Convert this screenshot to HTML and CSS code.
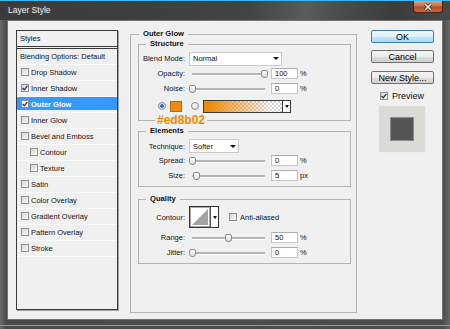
FILE: index.html
```html
<!DOCTYPE html>
<html lang="en">
<head>
    <meta charset="UTF-8">
    <title>Layer Style</title>
    <link rel="stylesheet" href="styles.css">
</head>
<body>
    <div class="window">
        <div class="titlebar">
            <span class="title">Layer Style</span>
            <span class="close">
                <svg width="10" height="8" viewBox="0 0 10 8"><path d="M2 1 L8 7 M8 1 L2 7" stroke="#3a1a0a" stroke-width="3"/><path d="M2 1 L8 7 M8 1 L2 7" stroke="#fff" stroke-width="1.6"/></svg>
            </span>
        </div>

        <div class="client">
            <div class="styles-list">
                <div class="list-head">Styles</div>
                <div class="list-body">
                    <div class="item plain">Blending Options: Default</div>
                    <div class="item"><span class="check"></span>Drop Shadow</div>
                    <div class="item"><span class="check"><svg width="6" height="6" viewBox="0 0 6 6"><path d="M0.6 3 L2.2 4.8 L5.4 0.8" fill="none" stroke="#1d2b55" stroke-width="1.2"/></svg></span>Inner Shadow</div>
                    <div class="item selected"><span class="check"><svg width="6" height="6" viewBox="0 0 6 6"><path d="M0.6 3 L2.2 4.8 L5.4 0.8" fill="none" stroke="#1d2b55" stroke-width="1.2"/></svg></span>Outer Glow</div>
                    <div class="item"><span class="check"></span>Inner Glow</div>
                    <div class="item"><span class="check"></span>Bevel and Emboss</div>
                    <div class="item sub"><span class="check"></span>Contour</div>
                    <div class="item sub"><span class="check"></span>Texture</div>
                    <div class="item"><span class="check"></span>Satin</div>
                    <div class="item"><span class="check"></span>Color Overlay</div>
                    <div class="item"><span class="check"></span>Gradient Overlay</div>
                    <div class="item"><span class="check"></span>Pattern Overlay</div>
                    <div class="item"><span class="check"></span>Stroke</div>
                </div>
            </div>

            <fieldset class="group outer">
                <legend>Outer Glow</legend>

                <fieldset class="group inner structure">
                    <legend>Structure</legend>
                    <div class="row">
                        <span class="lbl">Blend Mode:</span>
                        <div class="select blend-select">Normal<i class="caret"></i></div>
                    </div>
                    <div class="row">
                        <span class="lbl">Opacity:</span>
                        <div class="slider"><span class="thumb" style="left: 72px"></span></div>
                        <span class="num">100</span>
                        <span class="unit">%</span>
                    </div>
                    <div class="row">
                        <span class="lbl">Noise:</span>
                        <div class="slider"><span class="thumb" style="left: 0px"></span></div>
                        <span class="num">0</span>
                        <span class="unit">%</span>
                    </div>
                    <div class="row row-color">
                        <span class="radio on"></span>
                        <span class="swatch"></span>
                        <span class="radio"></span>
                        <div class="grad">
                            <span class="grad-fill"></span>
                            <span class="grad-arrow"><i class="caret small"></i></span>
                        </div>
                        <span class="hex">#ed8b02</span>
                    </div>
                </fieldset>

                <fieldset class="group inner elements">
                    <legend>Elements</legend>
                    <div class="row row-short">
                        <span class="lbl">Technique:</span>
                        <div class="select tech-select">Softer<i class="caret"></i></div>
                    </div>
                    <div class="row">
                        <span class="lbl">Spread:</span>
                        <div class="slider"><span class="thumb" style="left: 0px"></span></div>
                        <span class="num">0</span>
                        <span class="unit">%</span>
                    </div>
                    <div class="row">
                        <span class="lbl">Size:</span>
                        <div class="slider"><span class="thumb" style="left: 4px"></span></div>
                        <span class="num">5</span>
                        <span class="unit">px</span>
                    </div>
                </fieldset>

                <fieldset class="group inner quality">
                    <legend>Quality</legend>
                    <div class="row row-contour">
                        <span class="lbl">Contour:</span>
                        <div class="contour">
                            <svg width="20" height="20" viewBox="0 0 20 20"><rect x="0.5" y="0.5" width="19" height="19" fill="#fff" stroke="#a6a6a6"/><polygon points="2,18 18,2 18,18" fill="#a4a4a4"/></svg>
                            <span class="contour-arrow"><i class="caret small"></i></span>
                        </div>
                        <span class="check aa"></span>
                        <span>Anti-aliased</span>
                    </div>
                    <div class="row row-range">
                        <span class="lbl">Range:</span>
                        <div class="slider"><span class="thumb" style="left: 36px"></span></div>
                        <span class="num">50</span>
                        <span class="unit">%</span>
                    </div>
                    <div class="row">
                        <span class="lbl">Jitter:</span>
                        <div class="slider"><span class="thumb" style="left: 0px"></span></div>
                        <span class="num">0</span>
                        <span class="unit">%</span>
                    </div>
                </fieldset>
            </fieldset>

            <div class="actions">
                <div class="btn default">OK</div>
                <div class="btn cancel">Cancel</div>
                <div class="btn new-style">New Style...</div>
                <div class="preview-row">
                    <span class="check"><svg width="6" height="6" viewBox="0 0 6 6"><path d="M0.6 3 L2.2 4.8 L5.4 0.8" fill="none" stroke="#1d2b55" stroke-width="1.2"/></svg></span>
                    <span>Preview</span>
                </div>
                <div class="preview-box"><span></span></div>
            </div>
        </div>
    </div>
</body>
</html>
```

FILE: styles.css
```css
* {
    margin: 0;
    padding: 0;
    box-sizing: border-box;
}

body {
    width: 450px;
    height: 329px;
    overflow: hidden;
    font-family: 'Liberation Sans', Arial, sans-serif;
    font-size: 7.5px;
    color: #111;
    background: #4a4a4a;
}

/* window frame */
.window {
    height: 329px;
    display: flex;
    flex-direction: column;
    padding: 0 7px 9px;
    border-top: 1px solid #3cb8ea;
    background:
        linear-gradient(#3cb8ea, #3cb8ea) left bottom 3px / 100% 1px no-repeat,
        linear-gradient(90deg, #6a6a6a, #4a4a4a 1.5%, #4e4e4e 98.5%, #686868);
}

.titlebar {
    height: 19px;
    flex: none;
    margin: 0 -7px;
    padding: 0 7px;
    display: flex;
    justify-content: space-between;
    align-items: flex-start;
    background: linear-gradient(100deg, #3a3a3a 0%, #434343 55%, #5a5a5a 68%, #4a4a4a 76%, #3c3c3c 88%, #484848 100%);
}

.title {
    padding: 4px 0 0 1px;
    font-size: 8.5px;
    line-height: 10px;
    color: #e6e6e6;
    text-shadow: 0 0 3px rgba(255, 255, 255, 0.25);
}

.close {
    width: 30px;
    height: 12px;
    display: flex;
    align-items: center;
    justify-content: center;
    border: 1px solid #4a2414;
    border-top: none;
    border-radius: 0 0 3px 3px;
    background: linear-gradient(#e0a07c, #c87048 45%, #b0502a 55%, #c06a3c);
}

.close svg {
    display: block;
}

.client {
    flex: 1;
    min-height: 0;
    display: flex;
    align-items: flex-start;
    background: #f0f0f0;
    border: 1px solid #727272;
    padding: 9px 8px;
}

/* styles list */
.styles-list {
    width: 102px;
    height: 280px;
    margin-right: 12px;
    flex: none;
    border: 1px solid #3a3a3a;
    box-shadow: 1px 1px 0 #a4a4a4;
    background: #f0f0f0;
}

.list-head {
    height: 16px;
    padding-left: 3px;
    line-height: 15px;
    border-bottom: 1px solid #3a3a3a;
}

.list-body {
    margin-top: 1px;
    border-top: 1px solid #3a3a3a;
}

.item {
    height: 16px;
    display: flex;
    align-items: center;
    gap: 2px;
    padding: 0 0 1px 4px;
    border-bottom: 1px solid #fbfbfb;
    white-space: nowrap;
}

.item.plain {
    padding-left: 3px;
}

.item.sub {
    padding-left: 13px;
}

.item.selected {
    background: linear-gradient(#3399ff, #3399ff) 0 0 / 100% 13px no-repeat;
    color: #fff;
    font-weight: bold;
}

.check {
    width: 8px;
    height: 8px;
    flex: none;
    display: flex;
    align-items: center;
    justify-content: center;
    border: 1px solid #8e8f8f;
    background: linear-gradient(135deg, #d4d4d4, #fbfbfb);
}

.item.selected .check {
    background: #fff;
}

.check svg {
    display: block;
}

/* group boxes */
.group {
    border: 1px solid #b3b3b3;
    min-width: 0;
}

.group legend {
    font-weight: bold;
    font-size: 7.6px;
    line-height: 10px;
    padding: 0 4px;
    color: #111;
}

.outer {
    width: 227px;
    height: 284px;
    flex: none;
    margin: -1px 0 -3px;
    padding: 0 5px 0 7px;
}

.outer > legend {
    margin-left: 1px;
}

.inner {
    width: 213px;
}

.inner > legend {
    margin-left: 7px;
}

.structure {
    padding: 2px 0 6px;
}

.elements {
    margin-top: 5px;
    padding: 3px 0 3px;
}

.quality {
    margin-top: 7px;
    padding: 2px 0 3px;
}

/* rows */
.row {
    height: 15px;
    display: flex;
    align-items: center;
    white-space: nowrap;
}

.row-short {
    height: 14px;
}

.row-contour {
    height: 22px;
}

.row-range {
    margin-top: 2px;
}

.lbl {
    width: 46px;
    flex: none;
    margin-right: 4px;
    text-align: right;
}

.select {
    height: 14px;
    display: flex;
    align-items: center;
    justify-content: space-between;
    padding: 0 2px 0 3px;
    background: #fff;
    border: 1px solid #cacaca;
}

.blend-select {
    width: 93px;
}

.tech-select {
    width: 50px;
}

.caret {
    width: 0;
    height: 0;
    border-left: 3px solid transparent;
    border-right: 3px solid transparent;
    border-top: 3px solid #111;
}

.caret.small {
    border-left-width: 2px;
    border-right-width: 2px;
    border-top-width: 3px;
}

.slider {
    position: relative;
    width: 79px;
    height: 10px;
    flex: none;
}

.slider::before {
    content: '';
    position: absolute;
    left: 3px;
    right: 3px;
    top: 4px;
    height: 2px;
    background: #b4b4b4;
    border-bottom: 1px solid #fff;
}

.thumb {
    position: absolute;
    top: 1px;
    width: 7px;
    height: 8px;
    border: 1px solid #8c8c8c;
    border-radius: 2px 2px 3px 3px;
    background: linear-gradient(#ffffff, #dadada);
}

.num {
    width: 27px;
    height: 11px;
    margin-left: 3px;
    padding-left: 3px;
    line-height: 9px;
    background: #fff;
    border: 1px solid #c6c6c6;
    border-top-color: #adadad;
}

.unit {
    margin-left: 2px;
}

/* color row */
.row-color {
    height: 16px;
    margin-top: 2px;
    padding-left: 19px;
    position: relative;
}

.radio {
    width: 8px;
    height: 8px;
    flex: none;
    margin-right: 4px;
    border-radius: 50%;
    border: 1px solid #8e8f8f;
    background: radial-gradient(circle at 40% 35%, #fefefe, #d0d0d0);
}

.radio.on {
    background: radial-gradient(circle, #1f74d2 0 1.5px, #cde3f8 2.2px, #e6e6e6 3px);
}

.swatch {
    width: 12px;
    height: 11px;
    margin-right: 9px;
    background: #ee8c10;
    border: 1px solid #b86a08;
}

.grad {
    width: 88px;
    height: 13px;
    display: flex;
    border: 1px solid #3a3a3a;
}

.grad-fill {
    flex: 1;
    background:
        linear-gradient(90deg, #ed8b02 5%, rgba(237, 139, 2, 0) 85%),
        repeating-conic-gradient(#d2d2d2 0 25%, #ffffff 0 50%) 0 0 / 4px 4px;
}

.grad-arrow {
    width: 8px;
    display: flex;
    align-items: center;
    justify-content: center;
    background: #fff;
    border-left: 1px solid #3a3a3a;
}

.hex {
    position: absolute;
    left: 16px;
    top: 17px;
    padding: 0 2px;
    font-size: 12px;
    line-height: 10px;
    font-weight: bold;
    color: #ed8b02;
    background: #f0f0f0;
}

/* contour */
.contour {
    width: 30px;
    height: 22px;
    display: flex;
    border: 1px solid #333;
    background: #fff;
    margin-right: 10px;
}

.contour svg {
    display: block;
}

.contour-arrow {
    flex: 1;
    display: flex;
    align-items: center;
    justify-content: center;
    border-left: 1px solid #555;
}

.check.aa {
    margin-right: 3px;
}

/* buttons */
.actions {
    width: 63px;
    margin-left: 14px;
    flex: none;
    display: flex;
    flex-direction: column;
}

.btn {
    height: 13px;
    display: flex;
    align-items: center;
    justify-content: center;
    font-size: 9px;
    color: #000;
    border: 1px solid #707070;
    border-radius: 2px;
    background: linear-gradient(#f4f4f4, #ececec 50%, #dedede 50%, #d0d0d0);
}

.btn.default {
    border-color: #3c7fb1;
    background: linear-gradient(#eef8fe, #dcf1fc 50%, #c2e7fc 50%, #acdaf4);
}

.btn.cancel {
    margin-top: 7px;
}

.btn.new-style {
    margin-top: 8px;
}

.preview-row {
    height: 11px;
    margin-top: 6px;
    padding-left: 9px;
    display: flex;
    align-items: center;
    gap: 4px;
    font-size: 9px;
}

.preview-box {
    width: 48px;
    height: 48px;
    margin: 4px 0 0 7px;
    display: flex;
    align-items: center;
    justify-content: center;
    background: #dadad6;
    border: 1px solid #ededed;
}

.preview-box span {
    width: 24px;
    height: 24px;
    background: #555;
    border: 1px solid #8c8c8c;
}
```
